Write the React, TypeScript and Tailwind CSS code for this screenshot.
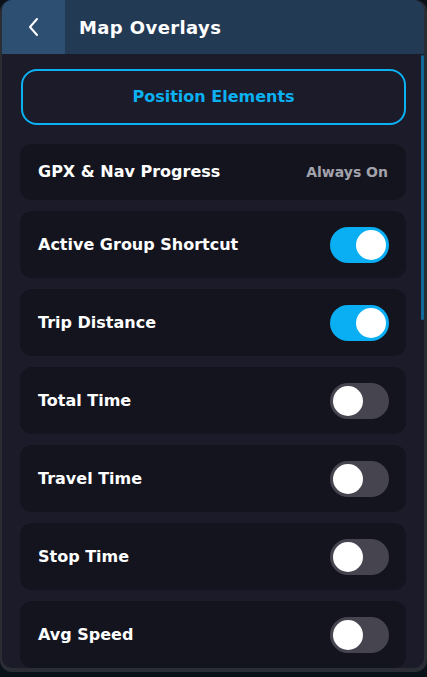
import React from 'react'

const font = { fontFamily: '"DejaVu Sans", "Liberation Sans", sans-serif' }

type Item = { label: string; on?: boolean; always?: boolean }

const items: Item[] = [
  { label: 'GPX & Nav Progress', always: true },
  { label: 'Active Group Shortcut', on: true },
  { label: 'Trip Distance', on: true },
  { label: 'Total Time' },
  { label: 'Travel Time' },
  { label: 'Stop Time' },
  { label: 'Avg Speed' },
]

function Toggle({ on }: { on?: boolean }) {
  return (
    <div
      className={
        on
          ? 'w-[59px] h-[36px] rounded-full bg-[#0aaef3] flex items-center justify-end px-[3px]'
          : 'w-[59px] h-[36px] rounded-full bg-[#46454f] flex items-center justify-start px-[3px]'
      }
    >
      <div className="w-[30px] h-[30px] rounded-full bg-white" />
    </div>
  )
}

function Row({ item }: { item: Item }) {
  if (item.always) {
    return (
      <div className="h-[56px] shrink-0 rounded-[12px] bg-[#14141f] flex items-center justify-between pl-[18px] pr-[18px]">
        <span className="text-white text-[16px] font-bold">{item.label}</span>
        <span className="text-[#a3a3ab] text-[14px] font-bold">Always On</span>
      </div>
    )
  }
  return (
    <div className="h-[67px] shrink-0 rounded-[12px] bg-[#14141f] flex items-center justify-between pl-[18px] pr-[17px]">
      <span className="text-white text-[16px] font-bold">{item.label}</span>
      <Toggle on={item.on} />
    </div>
  )
}

export default function App() {
  return (
    <div className="w-[427px] h-[677px] bg-[#0b1119] overflow-hidden" style={font}>
      <div className="h-[672px] bg-[#2a2d33] rounded-[12px] pl-[2px] pr-[3px] pb-[4px] flex">
        <div className="flex-1 rounded-[10px] overflow-hidden flex flex-col bg-[#1c1b29]">
          <header className="h-[54px] shrink-0 flex bg-[#233a55]">
            <div className="w-[63px] bg-[#2d5072] flex items-center justify-center">
              <svg width="14" height="20" viewBox="0 0 14 20" fill="none">
                <polyline points="10,2 3,10 10,18" stroke="white" strokeWidth="2" strokeLinecap="round" strokeLinejoin="round" />
              </svg>
            </div>
            <h1 className="ml-[14px] self-center text-white text-[18px] font-bold tracking-[0.4px]">Map Overlays</h1>
          </header>
          <div className="flex-1 relative overflow-hidden">
            <div className="flex flex-col gap-[11px] px-[18px] pt-[15px]">
              <button className="h-[56px] shrink-0 ml-[1px] rounded-[16px] border-2 border-[#0bb1f2] text-[#0bb1f2] text-[16px] font-bold mb-[8px]">
                Position Elements
              </button>
              {items.map((it) => (
                <Row key={it.label} item={it} />
              ))}
            </div>
            <div className="absolute right-0 top-[1px] w-[3px] h-[265px] bg-[#0f6a9a] rounded-full" />
          </div>
        </div>
      </div>
    </div>
  )
}
